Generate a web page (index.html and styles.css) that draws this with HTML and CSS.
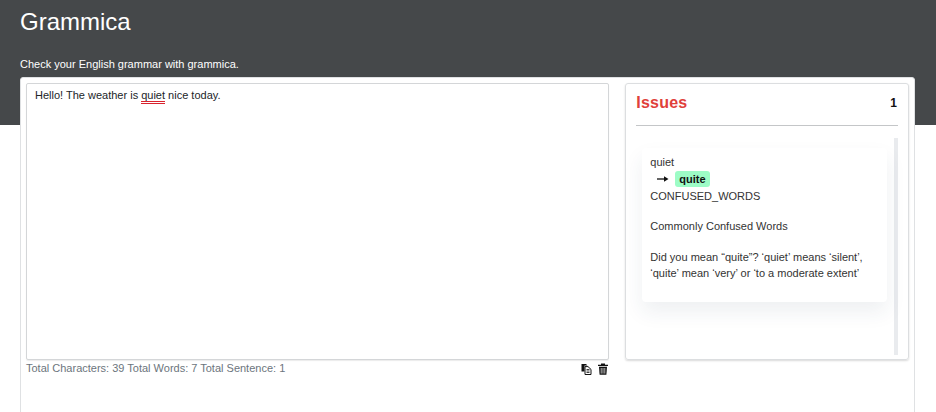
FILE: index.html
```html
<!DOCTYPE html>
<html lang="en">
<head>
<meta charset="utf-8">
<title>Grammica</title>
<link rel="stylesheet" href="styles.css">
</head>
<body>
<header class="hero">
  <h1 class="title">Grammica</h1>
  <p class="tagline">Check your English grammar with grammica.</p>
</header>
<main class="card">
  <section class="left">
    <div class="editor">Hello! The weather is <span class="err">quiet</span> nice today.</div>
    <div class="stats">
      <span>Total Characters: 39 Total Words: 7 Total Sentence: 1</span>
      <span class="tools">
        <svg class="ico" viewBox="0 0 12 12"><path d="M1.5 1h4.5l1.5 1.5H4.5v6h-3z" fill="#111"/><path d="M5 3.6h3l3 2.8v5.1H5z" fill="#fff" stroke="#111" stroke-width="1"/><path d="M6.5 6.5h3M6.5 8h3M6.5 9.5h3" stroke="#111" stroke-width=".8"/></svg>
        <svg class="ico" viewBox="0 0 12 12"><path d="M1 1.8h10v1.3H1zM4 .6h4v1.2H4z" fill="#111"/><path d="M2 3.8h8l-.6 8H2.6z" fill="#111"/><path d="M4.2 5v5.6M6 5v5.6M7.8 5v5.6" stroke="#fff" stroke-width=".7"/></svg>
      </span>
    </div>
  </section>
  <aside class="issues">
    <div class="issues-head">
      <h2 class="issues-title">Issues</h2>
      <span class="count">1</span>
    </div>
    <div class="issues-body">
      <article class="issue">
        <div>quiet</div>
        <div class="fix">
          <svg class="arrow" viewBox="0 0 12 8"><path d="M0 4h8" stroke="#111" stroke-width="1.3"/><path d="M7 1.2 11.5 4 7 6.8z" fill="#111"/></svg>
          <span class="chip">quite</span>
        </div>
        <div>CONFUSED_WORDS</div>
        <p class="para">Commonly Confused Words</p>
        <p class="para para-last">Did you mean “quite”? ‘quiet’ means ‘silent’, ‘quite’ mean ‘very’ or ‘to a moderate extent’</p>
      </article>
    </div>
  </aside>
</main>
</body>
</html>
```
FILE: styles.css
```css
* { box-sizing: border-box; }
html, body { margin: 0; height: 412px; overflow: hidden; background: #fff; }
body { font-family: "Liberation Sans", Arial, sans-serif; font-size: 11px; color: #212529; position: relative; }
.hero { background: #45484a; height: 125px; padding: 7px 20px 0; color: #fff; }
.title { margin: 0; font-size: 24px; font-weight: 400; line-height: 30px; }
.tagline { margin: 20px 0 0; font-size: 11px; line-height: 14px; }
.card { position: absolute; left: 20px; top: 77px; width: 895px; height: 340px; background: #fff; border: 1px solid #dfe1e3; border-radius: 3px; padding: 5px; display: flex; gap: 16px; }
.left { width: 584px; }
.editor { height: 277px; border: 1px solid #d4d6d8; border-radius: 2px; padding: 4px 8px; line-height: 14px; font-size: 11px; box-shadow: 0 1px 1px rgba(0,0,0,.08); }
.err { border-bottom: 3px double #d9232e; }
.stats { display: flex; justify-content: space-between; align-items: center; color: #6c757d; font-size: 11px; line-height: 14px; margin-top: 1px; }
.tools { display: flex; gap: 5px; padding-top: 2px; }
.ico { width: 12px; height: 12px; display: block; }
.issues { width: 284px; height: 277px; border: 1px solid #dcdee0; border-radius: 3px; box-shadow: 0 1px 2px rgba(0,0,0,.15); padding: 0 10px; }
.issues-head { display: flex; justify-content: space-between; align-items: center; height: 42px; border-bottom: 1px solid #c4c6c8; padding: 0 1px 3px 0; }
.issues-title { margin: 0; font-size: 16px; letter-spacing: .2px; font-weight: 700; color: #e0403a; }
.count { font-size: 12px; font-weight: 700; color: #111; }
.issues-body { height: 217px; margin-top: 12px; border-right: 4px solid #e9ebee; padding: 10px 7px 0 6px; }
.issue { height: 154px; padding: 6px 8px; line-height: 17px; box-shadow: 0 10px 20px rgba(40,60,90,.08); border-radius: 4px; color: #333; }
.fix { display: flex; align-items: center; height: 17px; padding: 0 0 1px 7px; }
.arrow { width: 12px; height: 8px; margin-right: 6px; }
.chip { background: #9dfcc6; color: #111; font-weight: 700; padding: 0 4px; border-radius: 3px; line-height: 16px; }
.para { margin: 13px 0 0; }
.para-last { margin-top: 14px; line-height: 16px; }
```
